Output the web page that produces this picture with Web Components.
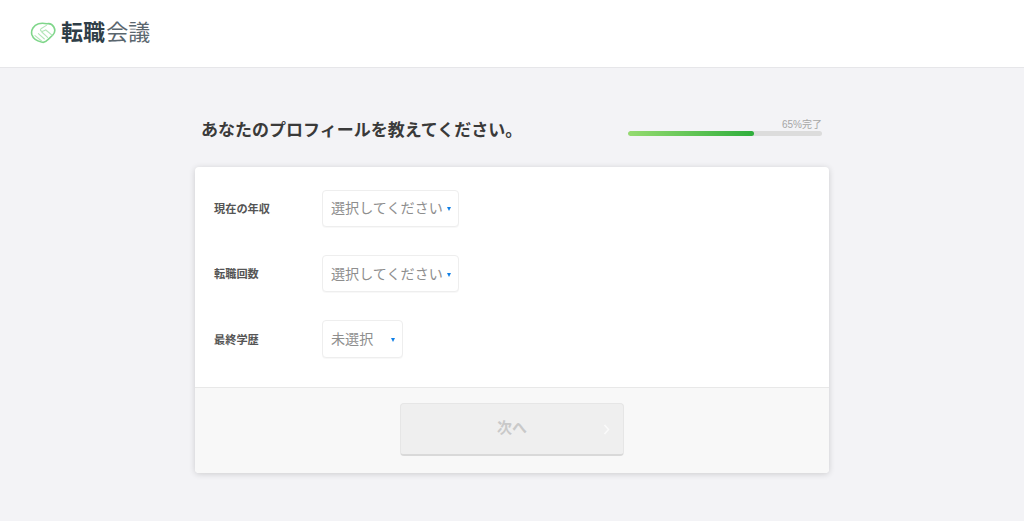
<!DOCTYPE html>
<html lang="ja">
<head>
<meta charset="utf-8">
<title>転職会議</title>
<style>
html,body{margin:0;padding:0;height:521px;overflow:hidden;background:#f3f3f6;}
body{font-family:"Liberation Sans","Noto Sans CJK JP",sans-serif;}
</style>
</head>
<body>
<site-header></site-header>
<profile-page>
  <form-row label="現在の年収"><select-box width="137">選択してください</select-box></form-row>
  <form-row label="転職回数"><select-box width="137">選択してください</select-box></form-row>
  <form-row label="最終学歴"><select-box width="81">未選択</select-box></form-row>
</profile-page>
<script>
const JP='"Liberation Sans","Noto Sans CJK JP",sans-serif';

class SiteHeader extends HTMLElement {
  constructor() {
    super();
    this.attachShadow({ mode: 'open' });
    this.shadowRoot.innerHTML = `
    <style>
    :host{
      display:flex;
      align-items:center;
      box-sizing:border-box;
      height:68px;
      padding:0 0 2px 30px;
      background:#fff;
      border-bottom:solid 1px #e6e6e9;
      font-family:${JP};
    }
    svg{display:block;margin-right:5px;}
    .logo{font-size:22px;line-height:28px;letter-spacing:0.1px;color:#2f3e48;white-space:nowrap;}
    b{font-weight:700;}
    span{font-weight:400;color:#5a666e;margin-left:1px;}
    </style>
    <svg width="26" height="22" viewBox="0 0 26 22" fill="none">
      <path d="M8.5 1.8C11.5 .8 14.5 1.2 17 1.8C20 1.2 22.4 2.4 23.8 5C25.4 8 25 10.8 22.8 13L18 17.6C16 20 13.5 20.8 11.5 20C7 19 3 16.4 1.8 12.5C.8 8 3.6 3.2 8.5 1.8Z" stroke="#7fd68a" stroke-width="1.6"/>
      <path d="M16.4 3.4L11 6.8C9.6 8 11 9.8 12.8 9.2L15.8 8L22 13.2M5 13.6L11.6 19M8.4 11.6L14.4 17M11.8 10L17.6 15.4" stroke="#b2e6b8" stroke-width="1.1" stroke-linecap="round"/>
    </svg>
    <div class='logo'><b>転職</b><span>会議</span></div>
    `;
  }
}
customElements.define('site-header', SiteHeader);

class ProgressMeter extends HTMLElement {
  constructor() {
    super();
    this.attachShadow({ mode: 'open' });
    this.shadowRoot.innerHTML = `
    <style>
    :host{
      display:block;
      width:194px;
      font-family:${JP};
    }
    .label{
      font-size:10px;
      line-height:12px;
      color:#a6a6a6;
      text-align:right;
    }
    .track{height:5px;border-radius:3px;background:#dcdcdc;overflow:hidden;}
    .fill{
      height:100%;
      width:65%;
      border-radius:3px;
      background:linear-gradient(to right,#95db70,#2fae3c);
    }
    </style>
    <div class='label'>65%完了</div>
    <div class='track'><div class='fill'></div></div>
    `;
  }
}
customElements.define('progress-meter', ProgressMeter);

class SelectBox extends HTMLElement {
  constructor() {
    super();
    this.attachShadow({ mode: 'open' });
    this.shadowRoot.innerHTML = `
    <style>
    :host{
      display:flex;
      align-items:center;
      justify-content:space-between;
      box-sizing:border-box;
      height:37.4px;
      padding:0 7px 2px 8px;
      background:#fff;
      border:solid 1px #eeeeee;
      border-radius:4px;
      box-shadow:0 1px 1px rgba(0,0,0,0.03);
      color:#8e8e8e;
      font-size:14.1px;
      white-space:nowrap;
      font-family:${JP};
    }
    i{
      width:0;height:0;
      margin:4px 0 0 4px;
      border:solid 2.5px transparent;
      border-top:solid 4.5px #0f7fe6;
      border-bottom:none;
    }
    </style>
    <slot></slot><i></i>
    `;
  }
  connectedCallback() {
    this.style.width = this.getAttribute('width') + 'px';
  }
}
customElements.define('select-box', SelectBox);

class FormRow extends HTMLElement {
  constructor() {
    super();
    this.attachShadow({ mode: 'open' });
    this.shadowRoot.innerHTML = `
    <style>
    :host{
      display:flex;
      align-items:center;
      font-family:${JP};
    }
    .name{
      width:108px;
      padding-bottom:1px;
      font-size:11.2px;
      font-weight:700;
      color:#555;
    }
    </style>
    <div class='name'></div>
    <slot></slot>
    `;
  }
  connectedCallback() {
    this.shadowRoot.querySelector('.name').textContent = this.getAttribute('label');
  }
}
customElements.define('form-row', FormRow);

class NextButton extends HTMLElement {
  constructor() {
    super();
    this.attachShadow({ mode: 'open' });
    this.shadowRoot.innerHTML = `
    <style>
    :host{
      display:flex;
      align-items:center;
      justify-content:center;
      position:relative;
      box-sizing:border-box;
      width:224px;
      height:53px;
      padding-bottom:6px;
      background:#efefef;
      border:solid 1px #e6e6e6;
      border-bottom:solid 2px #d9d9d9;
      border-radius:4px;
      color:#c9c9c9;
      font-size:15px;
      font-weight:700;
      font-family:${JP};
    }
    svg{position:absolute;right:13px;top:20px;}
    </style>
    <slot></slot>
    <svg width="7" height="11" viewBox="0 0 7 11" fill="none"><path d="M1.5 1L5.5 5.5L1.5 10" stroke="#fafafa" stroke-width="1.5"/></svg>
    `;
  }
}
customElements.define('next-button', NextButton);

class ProfilePage extends HTMLElement {
  constructor() {
    super();
    this.attachShadow({ mode: 'open' });
    this.shadowRoot.innerHTML = `
    <style>
    :host{
      display:block;
      width:634px;
      margin:0 auto;
      font-family:${JP};
    }
    .head{
      display:flex;
      justify-content:space-between;
      align-items:flex-end;
      box-sizing:border-box;
      height:99px;
      padding:0 7px 31px 6px;
    }
    h1{
      margin:0 0 -7px;
      font-size:17px;
      line-height:24px;
      font-weight:700;
      color:#3a3a3a;
    }
    .card{
      background:#fff;
      border-radius:4px;
      box-shadow:0 1px 6px rgba(0,0,0,0.16);
      overflow:hidden;
    }
    .fields{
      display:flex;
      flex-direction:column;
      gap:28px;
      box-sizing:border-box;
      height:220px;
      padding:22.7px 19px 0;
    }
    .foot{
      display:flex;
      justify-content:center;
      box-sizing:border-box;
      height:86px;
      padding-top:15px;
      background:#f8f8f8;
      border-top:solid 1px #e8e8e8;
    }
    </style>
    <div class='head'>
      <h1>あなたのプロフィールを教えてください。</h1>
      <progress-meter></progress-meter>
    </div>
    <div class='card'>
      <div class='fields'><slot></slot></div>
      <div class='foot'><next-button>次へ</next-button></div>
    </div>
    `;
  }
}
customElements.define('profile-page', ProfilePage);
</script>
</body>
</html>
